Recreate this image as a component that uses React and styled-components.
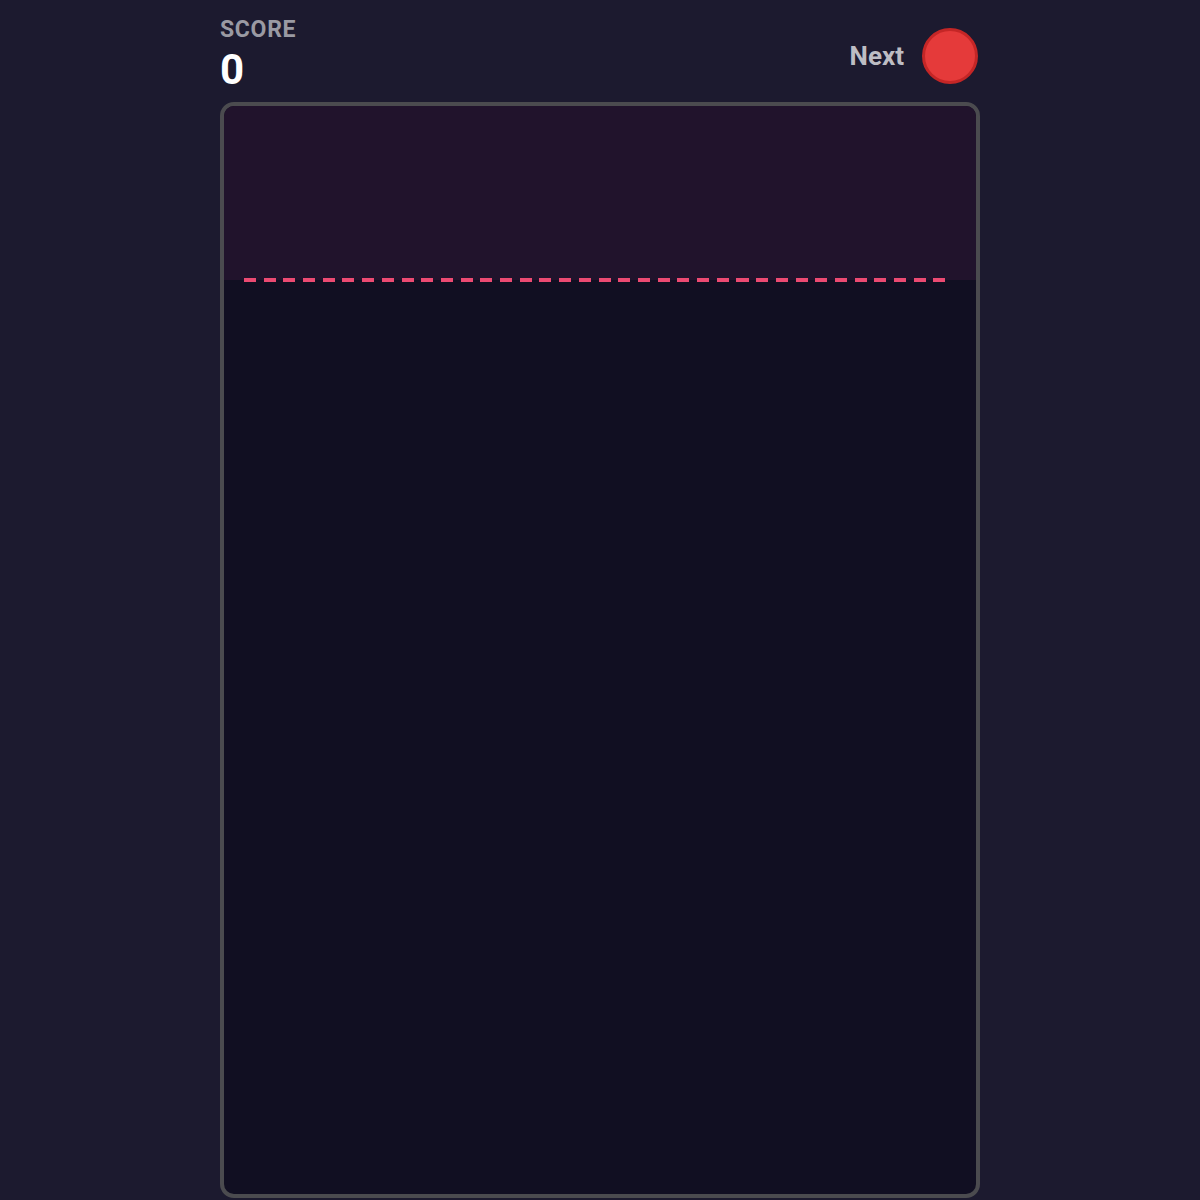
import React from 'react';
import styled, { createGlobalStyle } from 'styled-components';

const colors = {
    page: '#1c1a2f',
    board: '#110f22',
    danger: '#21132c',
    frame: '#4b4b4f',
    dash: '#ec4a72',
    label: '#9a9aa3',
    next: '#bdbdc4',
    white: '#ffffff',
    ball: '#e53a3a',
    ballEdge: '#c42626',
};

const GlobalStyle = createGlobalStyle`
    html, body {
        margin: 0;
        padding: 0;
        background-color: ${colors.page};
        font-family: Roboto, "Liberation Sans", sans-serif;
    }
`;

const Page = styled.div`
    display: flex;
    justify-content: center;
    padding-top: 16px;
    min-height: 1200px;
    box-sizing: border-box;
`;

const Game = styled.div`
    width: 760px;
    display: flex;
    flex-direction: column;
`;

const Header = styled.div`
    display: flex;
    justify-content: space-between;
    align-items: flex-start;
    margin-bottom: 10px;
`;

const ScoreBox = styled.div`
    display: flex;
    flex-direction: column;
`;

const ScoreLabel = styled.div`
    font-size: 23px;
    font-weight: 700;
    line-height: 28px;
    letter-spacing: 0.7px;
    color: ${colors.label};
`;

const ScoreValue = styled.div`
    font-size: 42px;
    font-weight: 700;
    line-height: 44px;
    margin-top: 4px;
    color: ${colors.white};
`;

const NextBox = styled.div`
    display: flex;
    align-items: center;
    gap: 18px;
    margin-top: 12px;
    margin-right: 2px;
`;

const NextLabel = styled.span`
    font-size: 26px;
    font-weight: 700;
    color: ${colors.next};
`;

const Ball = styled.div`
    width: ${props => props.size}px;
    height: ${props => props.size}px;
    border-radius: 50%;
    background-color: ${props => props.color};
    border: 3px solid ${props => props.edge};
    box-sizing: border-box;
`;

const Board = styled.div`
    height: 1096px;
    border: 4px solid ${colors.frame};
    border-radius: 14px;
    background-color: ${colors.board};
    box-sizing: border-box;
    overflow: hidden;
`;

const DangerZone = styled.div`
    height: 174px;
    background-color: ${colors.danger};
    display: flex;
    flex-direction: column;
    justify-content: flex-end;
    padding: 0 28px 0 20px;
`;

const DashedLine = styled.div`
    height: 4px;
    margin-bottom: -2px;
    background-image: repeating-linear-gradient(
        to right,
        ${colors.dash} 0px,
        ${colors.dash} 12px,
        transparent 12px,
        transparent 19.7px
    );
`;

export default function App() {
    return (
        <Page>
            <GlobalStyle />
            <Game>
                <Header>
                    <ScoreBox>
                        <ScoreLabel>SCORE</ScoreLabel>
                        <ScoreValue>0</ScoreValue>
                    </ScoreBox>
                    <NextBox>
                        <NextLabel>Next</NextLabel>
                        <Ball size={56} color={colors.ball} edge={colors.ballEdge} />
                    </NextBox>
                </Header>
                <Board>
                    <DangerZone>
                        <DashedLine />
                    </DangerZone>
                </Board>
            </Game>
        </Page>
    );
}
